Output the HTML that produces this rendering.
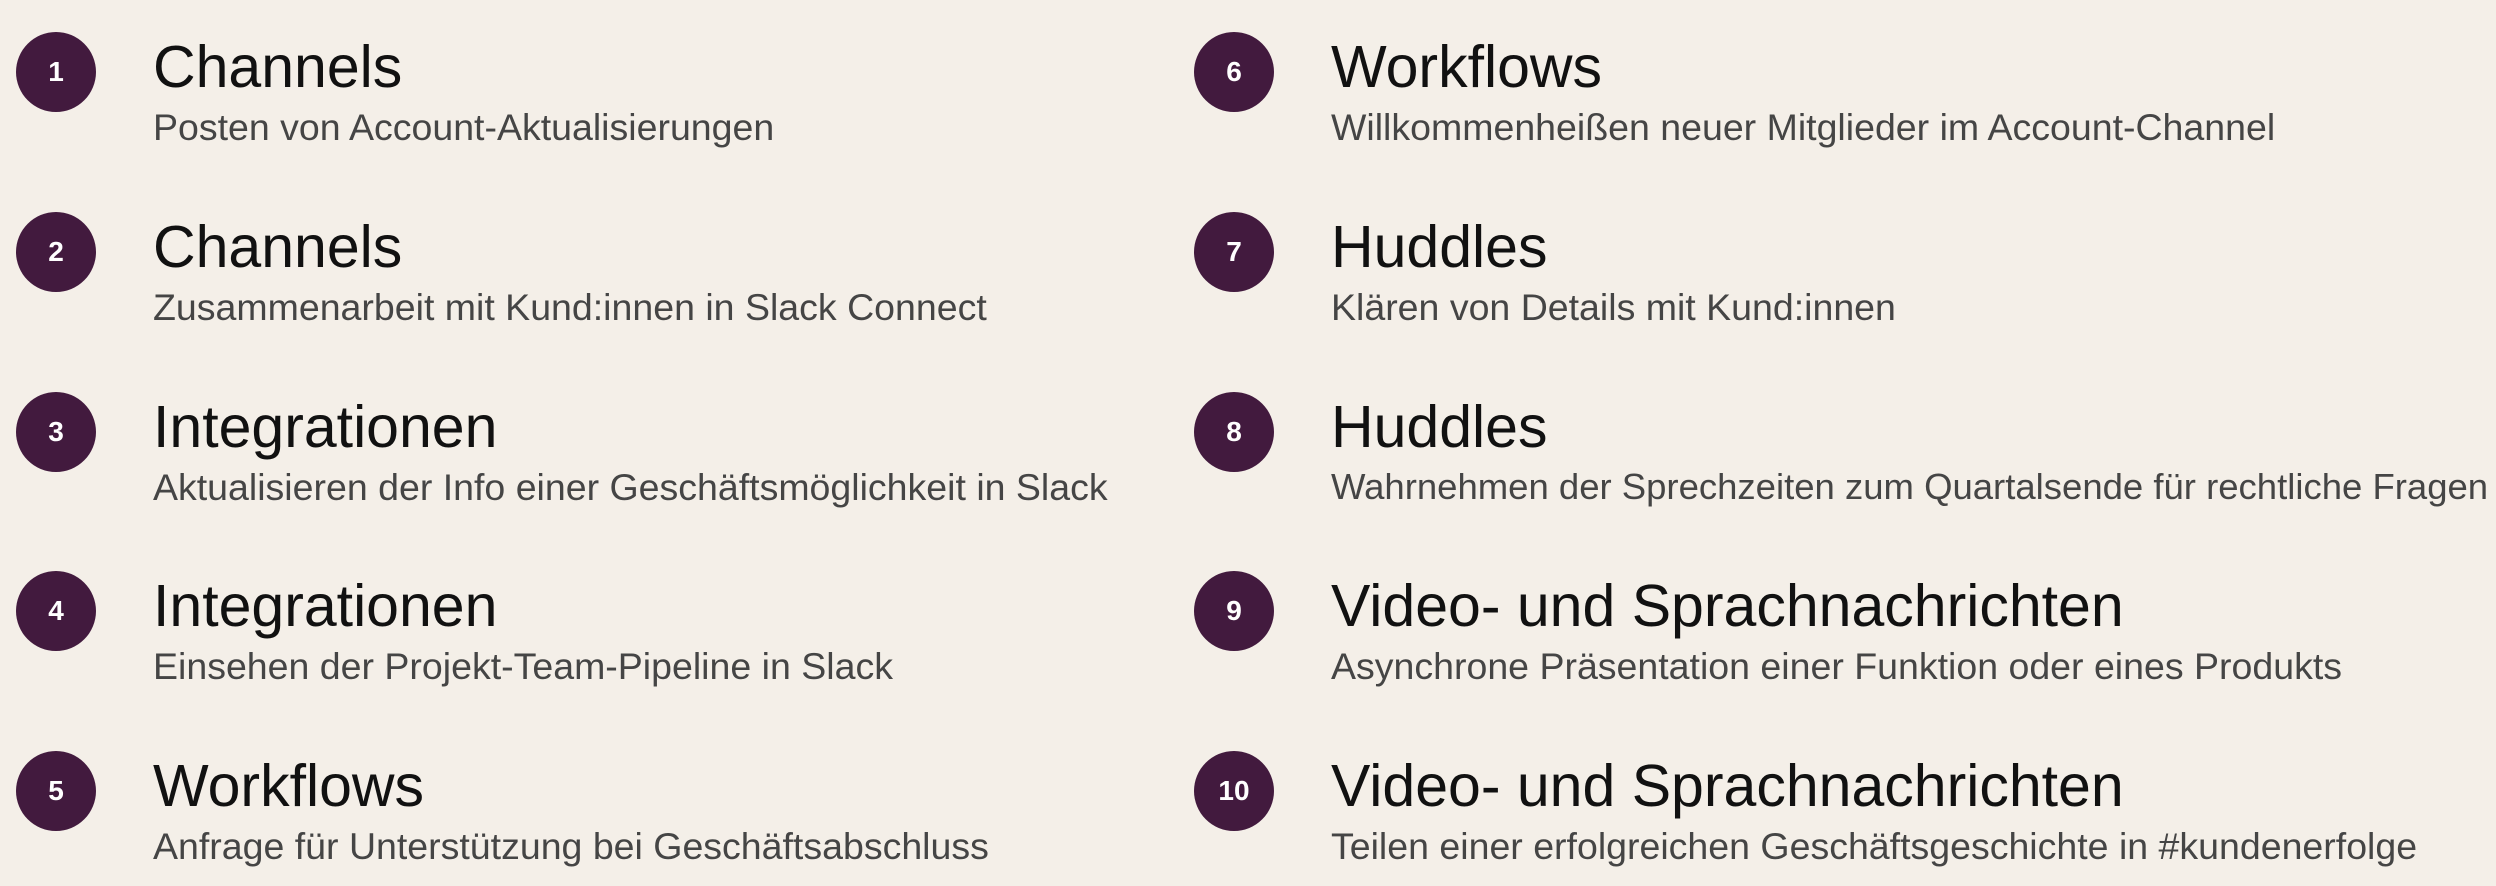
<!DOCTYPE html>
<html><head><meta charset="utf-8"><style>
html,body{margin:0;padding:0}
body{width:2496px;height:886px;background:#f4efe8;position:relative;overflow:hidden;font-family:"Liberation Sans",sans-serif}
.c{position:absolute;width:80px;height:80px;border-radius:50%;background:#421a3e;color:#fff;font-weight:bold;font-size:28px;display:flex;align-items:center;justify-content:center}
.t{position:absolute;font-size:59px;line-height:1;color:#111;white-space:nowrap}
.s{position:absolute;font-size:37.5px;line-height:1;color:#454545;white-space:nowrap}
</style></head><body>
<div class="c" style="left:16px;top:32px">1</div><div class="t" style="left:153px;top:38px">Channels</div><div class="s" style="left:153px;top:109px">Posten von Account-Aktualisierungen</div>
<div class="c" style="left:16px;top:212px">2</div><div class="t" style="left:153px;top:218px">Channels</div><div class="s" style="left:153px;top:289px">Zusammenarbeit mit Kund:innen in Slack Connect</div>
<div class="c" style="left:16px;top:392px">3</div><div class="t" style="left:153px;top:398px">Integrationen</div><div class="s" style="left:153px;top:469px">Aktualisieren der Info einer Geschäftsmöglichkeit in Slack</div>
<div class="c" style="left:16px;top:571px">4</div><div class="t" style="left:153px;top:577px">Integrationen</div><div class="s" style="left:153px;top:648px">Einsehen der Projekt-Team-Pipeline in Slack</div>
<div class="c" style="left:16px;top:751px">5</div><div class="t" style="left:153px;top:757px">Workflows</div><div class="s" style="left:153px;top:828px">Anfrage für Unterstützung bei Geschäftsabschluss</div>
<div class="c" style="left:1194px;top:32px">6</div><div class="t" style="left:1331px;top:38px">Workflows</div><div class="s" style="left:1331px;top:109px">Willkommenheißen neuer Mitglieder im Account-Channel</div>
<div class="c" style="left:1194px;top:212px">7</div><div class="t" style="left:1331px;top:218px">Huddles</div><div class="s" style="left:1331px;top:289px">Klären von Details mit Kund:innen</div>
<div class="c" style="left:1194px;top:392px">8</div><div class="t" style="left:1331px;top:398px">Huddles</div><div class="s" style="left:1331px;top:469px;font-size:36.5px">Wahrnehmen der Sprechzeiten zum Quartalsende für rechtliche Fragen</div>
<div class="c" style="left:1194px;top:571px">9</div><div class="t" style="left:1331px;top:577px">Video- und Sprachnachrichten</div><div class="s" style="left:1331px;top:648px">Asynchrone Präsentation einer Funktion oder eines Produkts</div>
<div class="c" style="left:1194px;top:751px">10</div><div class="t" style="left:1331px;top:757px">Video- und Sprachnachrichten</div><div class="s" style="left:1331px;top:828px">Teilen einer erfolgreichen Geschäftsgeschichte in #kundenerfolge</div>
</body></html>
